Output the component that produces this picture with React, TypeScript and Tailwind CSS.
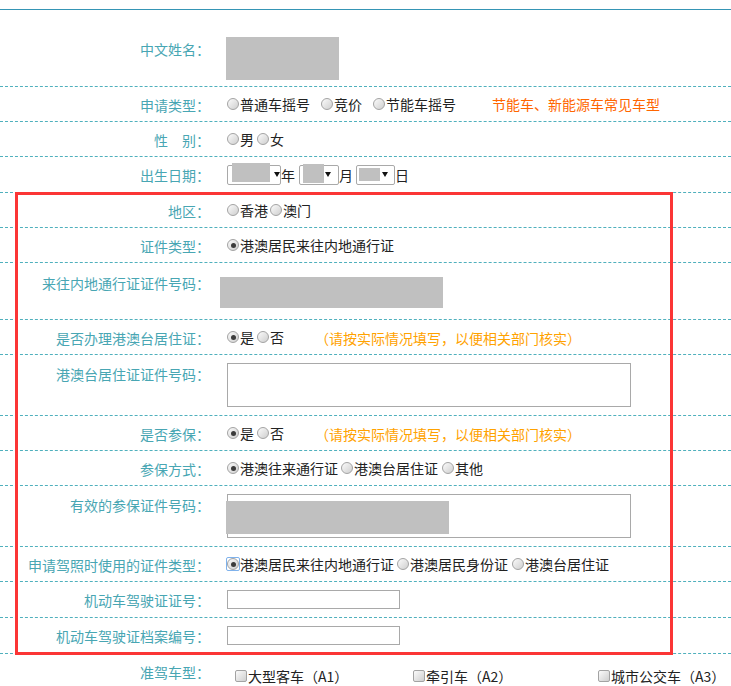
import type { ReactNode } from "react"

const LABEL = "text-[#48a6b3]"

function Radio({ checked = false, focus = false }: { checked?: boolean; focus?: boolean }) {
  const dot = (
    <span className="inline-flex h-[12px] w-[12px] items-center justify-center rounded-full border border-[#a3a3a3] bg-linear-to-br from-[#fbfbfb] to-[#cfcfcf]">
      {checked && <span className="h-[5px] w-[5px] rounded-full bg-[#3c3c3c]" />}
    </span>
  )
  if (focus) {
    return (
      <span className="-ml-px mr-0 inline-flex h-[14px] w-[14px] shrink-0 items-center justify-center rounded-[2px] border border-[#7fb2ec]">
        {dot}
      </span>
    )
  }
  return <span className="mr-px inline-flex shrink-0">{dot}</span>
}

function Opt({ label, checked, focus, className = "mr-[3px]" }: { label: string; checked?: boolean; focus?: boolean; className?: string }) {
  return (
    <span className={`inline-flex items-center ${className}`}>
      <Radio checked={checked} focus={focus} />
      <span className="whitespace-nowrap">{label}</span>
    </span>
  )
}

function Check({ label }: { label: string }) {
  return (
    <span className="inline-flex items-center">
      <span className="mr-px h-[12px] w-[12px] rounded-[2px] border border-[#a3a3a3] bg-linear-to-br from-[#fbfbfb] to-[#cfcfcf]" />
      <span className="whitespace-nowrap">{label}</span>
    </span>
  )
}

function Row({
  label,
  h,
  lpt = "pt-[8px]",
  vpt = "pt-[7px]",
  last = false,
  children,
}: {
  label: ReactNode
  h: string
  lpt?: string
  vpt?: string
  last?: boolean
  children?: ReactNode
}) {
  return (
    <div className={`flex ${last ? "" : "border-b border-dashed border-[#50b0bd]"} ${h}`}>
      <div className={`w-[210px] shrink-0 whitespace-nowrap text-right ${LABEL} ${lpt}`}>{label}</div>
      <div className={`flex flex-1 items-start pl-[17px] ${vpt}`}>{children}</div>
    </div>
  )
}

function Arrow() {
  return (
    <svg width="6" height="5" viewBox="0 0 6 5" className="absolute top-[6px]">
      <polygon points="0,0 6,0 3,5" fill="#111" />
    </svg>
  )
}

function DateSelect() {
  return (
    <div className="flex items-center">
      <span className="relative h-[20px] w-[54px] rounded-[2px] border border-[#a9a9a9]">
        <span className="absolute -top-[3px] left-[4px] h-[19px] w-[38px] bg-[#c0c0c0]" />
        <span className="absolute right-[6px] top-0 h-full">
          <Arrow />
        </span>
      </span>
      <span>年</span>
      <span className="relative ml-[4px] h-[20px] w-[40px] rounded-[2px] border border-[#a9a9a9]">
        <span className="absolute -top-[2px] left-[3px] h-[19px] w-[21px] bg-[#c0c0c0]" />
        <span className="absolute right-[13px] top-0 h-full">
          <Arrow />
        </span>
      </span>
      <span>月</span>
      <span className="relative ml-[3px] h-[20px] w-[39px] rounded-[2px] border border-[#a9a9a9]">
        <span className="absolute left-[2px] top-[2px] h-[13px] w-[21px] bg-[#c0c0c0]" />
        <span className="absolute right-[12px] top-0 h-full">
          <Arrow />
        </span>
      </span>
      <span>日</span>
    </div>
  )
}

export default function App() {
  return (
    <div className="relative min-h-[686px] w-[731px] overflow-hidden bg-white pt-[9px] text-[14px] leading-[20px] text-[#222] [font-family:'Noto_Sans_CJK_SC',sans-serif]">
      <div className="border-t border-[#3595b5]">
        <Row label="中文姓名：" h="h-[77px]" lpt="pt-[29px]" vpt="pt-[27px]">
          <div className="-ml-px h-[43px] w-[113px] bg-[#c0c0c0]" />
        </Row>

        <Row label="申请类型：" h="h-[35px]">
          <Opt label="普通车摇号" className="mr-[11px]" />
          <Opt label="竞价" className="mr-[11px]" />
          <Opt label="节能车摇号" className="mr-[36px]" />
          <span className="whitespace-nowrap text-[#ff6600]">节能车、新能源车常见车型</span>
        </Row>

        <Row label="性　别：" h="h-[35px]">
          <Opt label="男" />
          <Opt label="女" />
        </Row>

        <Row label="出生日期：" h="h-[36px]" vpt="pt-[8px]">
          <DateSelect />
        </Row>

        <Row label="地区：" h="h-[35px]">
          <Opt label="香港" className="mr-[2px]" />
          <Opt label="澳门" />
        </Row>

        <Row label="证件类型：" h="h-[35px]">
          <Opt label="港澳居民来往内地通行证" checked />
        </Row>

        <Row label="来往内地通行证证件号码：" h="h-[57px]" lpt="pt-[10px]" vpt="pt-[14px]">
          <div className="-ml-[7px] h-[31px] w-[223px] bg-[#c0c0c0]" />
        </Row>

        <Row label="是否办理港澳台居住证：" h="h-[35px]">
          <Opt label="是" checked />
          <Opt label="否" className="mr-[31px]" />
          <span className="mt-px whitespace-nowrap text-[#ffa200]">（请按实际情况填写，以便相关部门核实）</span>
        </Row>

        <Row label="港澳台居住证证件号码：" h="h-[61px]" lpt="pt-[9px]" vpt="pt-[8px]">
          <div className="h-[44px] w-[404px] border border-[#a9a9a9]" />
        </Row>

        <Row label="是否参保：" h="h-[35px]">
          <Opt label="是" checked />
          <Opt label="否" className="mr-[31px]" />
          <span className="mt-px whitespace-nowrap text-[#ffa200]">（请按实际情况填写，以便相关部门核实）</span>
        </Row>

        <Row label="参保方式：" h="h-[35px]">
          <Opt label="港澳往来通行证" checked />
          <Opt label="港澳台居住证" className="mr-[4px]" />
          <Opt label="其他" />
        </Row>

        <Row label="有效的参保证件号码：" h="h-[61px]" lpt="pt-[9px]" vpt="pt-[8px]">
          <div className="relative h-[44px] w-[404px] border border-[#a9a9a9]">
            <div className="absolute -left-[2px] top-[6px] h-[33px] w-[223px] bg-[#c0c0c0]" />
          </div>
        </Row>

        <Row label="申请驾照时使用的证件类型：" h="h-[35px]">
          <Opt label="港澳居民来往内地通行证" checked focus className="mr-[3px]" />
          <Opt label="港澳居民身份证" className="mr-[4px]" />
          <Opt label="港澳台居住证" />
        </Row>

        <Row label="机动车驾驶证证号：" h="h-[36px]" vpt="pt-[8px]">
          <div className="h-[19px] w-[173px] border border-[#a9a9a9]" />
        </Row>

        <Row label="机动车驾驶证档案编号：" h="h-[36px]" vpt="pt-[8px]">
          <div className="h-[19px] w-[173px] border border-[#a9a9a9]" />
        </Row>

        <Row label="准驾车型：" h="h-[32px]" vpt="pt-[12px]" last>
          <div className="ml-[8px] w-[178px]">
            <Check label="大型客车（A1）" />
          </div>
          <div className="w-[185px]">
            <Check label="牵引车（A2）" />
          </div>
          <div>
            <Check label="城市公交车（A3）" />
          </div>
        </Row>
      </div>

      <div className="pointer-events-none absolute left-[15px] top-[192px] h-[463px] w-[658px] border-[3px] border-[#fb3535]" />
    </div>
  )
}
